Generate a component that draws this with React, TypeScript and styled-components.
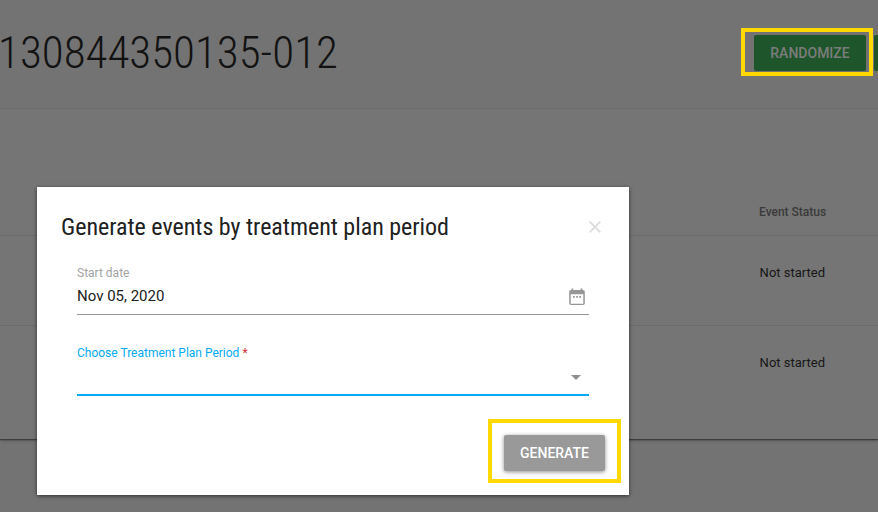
import React from "react";
import styled, { createGlobalStyle } from "styled-components";

const GlobalStyle = createGlobalStyle`
  * { box-sizing: border-box; }
  body { margin: 0; overflow: hidden; font-family: Roboto, sans-serif; }
`;

const Page = styled.div`
  position: relative;
  width: 878px;
  height: 512px;
  overflow: hidden;
  background: #737373;
`;

const Card = styled.main`
  height: 439px;
  background: #757575;
  box-shadow: 0 1px 3px rgba(0, 0, 0, 0.4), 0 1px 1px rgba(0, 0, 0, 0.3);
`;

const Header = styled.header`
  display: flex;
  justify-content: space-between;
  height: 109px;
  border-bottom: 1px solid #6b6b6b;
  background: #737373;
`;

const SubjectId = styled.h1`
  margin: 26px 0 0 -2px;
  font: 300 45px/54px "Roboto Condensed", Roboto, sans-serif;
  font-stretch: 75%;
  color: #121212;
  white-space: nowrap;
`;

const HeaderActions = styled.div`
  display: flex;
  gap: 8px;
  padding-top: 35px;
`;

const ActionButton = styled.button<{ $width: number; $fill: string; $ink: string; $raised?: boolean }>`
  width: ${(p) => p.$width}px;
  height: 36px;
  padding: 0;
  border: 0;
  border-radius: 2px;
  background: ${(p) => p.$fill};
  color: ${(p) => p.$ink};
  font: 500 14px/36px Roboto, sans-serif;
  white-space: nowrap;
  box-shadow: ${(p) => (p.$raised ? "0 1px 4px rgba(0, 0, 0, 0.45)" : "none")};
`;

const ClippedButton = styled(ActionButton)`
  border-radius: 2px 0 0 2px;
`;

const TableRow = styled.div<{ $height: number; $top: number; $last?: boolean }>`
  display: flex;
  justify-content: flex-end;
  height: ${(p) => p.$height}px;
  padding: ${(p) => p.$top}px 0 0;
  border-bottom: ${(p) => (p.$last ? "0" : "1px solid #6c6c6c")};
`;

const HeadingCell = styled.div`
  width: 119px;
  font: 500 12px/16px Roboto, sans-serif;
  color: #3a3a3a;
`;

const StatusCell = styled.div`
  width: 118.4px;
  font: 400 13px/16px Roboto, sans-serif;
  color: #171717;
`;

const Dialog = styled.section`
  position: absolute;
  left: 37px;
  top: 187px;
  width: 592px;
  height: 308px;
  padding: 24px 24px 0;
  background: #fff;
  box-shadow: 0 1px 4px rgba(0, 0, 0, 0.6);
`;

const DialogHeader = styled.div`
  display: flex;
  justify-content: space-between;
  align-items: center;
  height: 32px;
`;

const DialogTitle = styled.h2`
  margin: 0;
  font: 400 24px/32px "Roboto Condensed", Roboto, sans-serif;
  font-stretch: 75%;
  letter-spacing: -0.02px;
  color: #212121;
  white-space: nowrap;
`;

const CloseIcon = styled.svg`
  width: 12px;
  height: 12px;
  margin-right: 4px;
`;

const Field = styled.div<{ $gap: number; $focused?: boolean }>`
  height: ${(p) => (p.$focused ? 51 : 50)}px;
  margin: ${(p) => p.$gap}px 16px 0;
  border-bottom: ${(p) => (p.$focused ? "2px solid #03a9f4" : "1px solid #949494")};
`;

const Label = styled.div<{ $color: string }>`
  font: 400 12px/16px Roboto, sans-serif;
  color: ${(p) => p.$color};
`;

const Required = styled.span`
  color: #d32f2f;
`;

const Control = styled.div<{ $height: number }>`
  display: flex;
  justify-content: space-between;
  align-items: center;
  height: ${(p) => p.$height}px;
`;

const Value = styled.span`
  font: 400 15px/20px Roboto, sans-serif;
  color: #212121;
`;

const CalendarIcon = styled.svg`
  width: 16px;
  height: 18px;
  margin: 1px 4px 0 0;
`;

const Arrow = styled.svg`
  width: 10px;
  height: 5px;
  margin: 1px 8px 0 0;
`;

const DialogActions = styled.div`
  display: flex;
  justify-content: flex-end;
  margin-top: 39px;
`;

const Highlight = styled.div<{ $x: number; $y: number; $w: number; $h: number }>`
  position: absolute;
  left: ${(p) => p.$x}px;
  top: ${(p) => p.$y}px;
  width: ${(p) => p.$w}px;
  height: ${(p) => p.$h}px;
  border: 4px solid #ffd900;
`;

export default function App() {
  return (
    <>
      <GlobalStyle />
      <Page>
        <Card>
          <Header>
            <SubjectId>130844350135-012</SubjectId>
            <HeaderActions>
              <ActionButton $width={112} $fill="#1f552a" $ink="#7c7c7c">RANDOMIZE</ActionButton>
              <ClippedButton $width={4} $fill="#1f552a" $ink="#7c7c7c" aria-label="More" />
            </HeaderActions>
          </Header>
          <TableRow $height={127} $top={95}>
            <HeadingCell>Event Status</HeadingCell>
          </TableRow>
          <TableRow $height={90} $top={29}>
            <StatusCell>Not started</StatusCell>
          </TableRow>
          <TableRow $height={113} $top={29} $last>
            <StatusCell>Not started</StatusCell>
          </TableRow>
        </Card>
        <Dialog>
          <DialogHeader>
            <DialogTitle>Generate events by treatment plan period</DialogTitle>
            <CloseIcon viewBox="0 0 12 12" fill="none" stroke="#dcdcdc" strokeWidth="1.7">
              <path d="M.7.7 11.3 11.3M11.3.7.7 11.3" />
            </CloseIcon>
          </DialogHeader>
          <Field $gap={22}>
            <Label $color="#a3a3a3">Start date</Label>
            <Control $height={30}>
              <Value>Nov 05, 2020</Value>
              <CalendarIcon viewBox="0 0 16 18" fill="#969696">
                <path fillRule="evenodd" d="M2.6.4h1.7V2h7.4V.4h1.7V2h.6a1.8 1.8 0 0 1 1.8 1.8v11.5a1.8 1.8 0 0 1-1.8 1.8H2A1.8 1.8 0 0 1 .2 15.3V3.800A1.800 1.800 0 0 1 2 2h.6ZM1.700 6.300v9.400h12.600V6.300Z" />
                <path d="M4 8h1.700v1.700H4zM7.150 8h1.700v1.700h-1.700zM10.300 8H12v1.700h-1.700z" />
              </CalendarIcon>
            </Control>
          </Field>
          <Field $gap={30} $focused>
            <Label $color="#03a9f4">Choose Treatment Plan Period <Required>*</Required></Label>
            <Control $height={32}>
              <span />
              <Arrow viewBox="0 0 10 5" fill="#8f8f8f"><path d="M0 0h10L5 5Z" /></Arrow>
            </Control>
          </Field>
          <DialogActions>
            <ActionButton $width={101} $fill="#999999" $ink="#ffffff" $raised>GENERATE</ActionButton>
          </DialogActions>
        </Dialog>
        <Highlight $x={741} $y={28} $w={132} $h={48} />
        <Highlight $x={488} $y={419} $w={133} $h={64} />
      </Page>
    </>
  );
}
